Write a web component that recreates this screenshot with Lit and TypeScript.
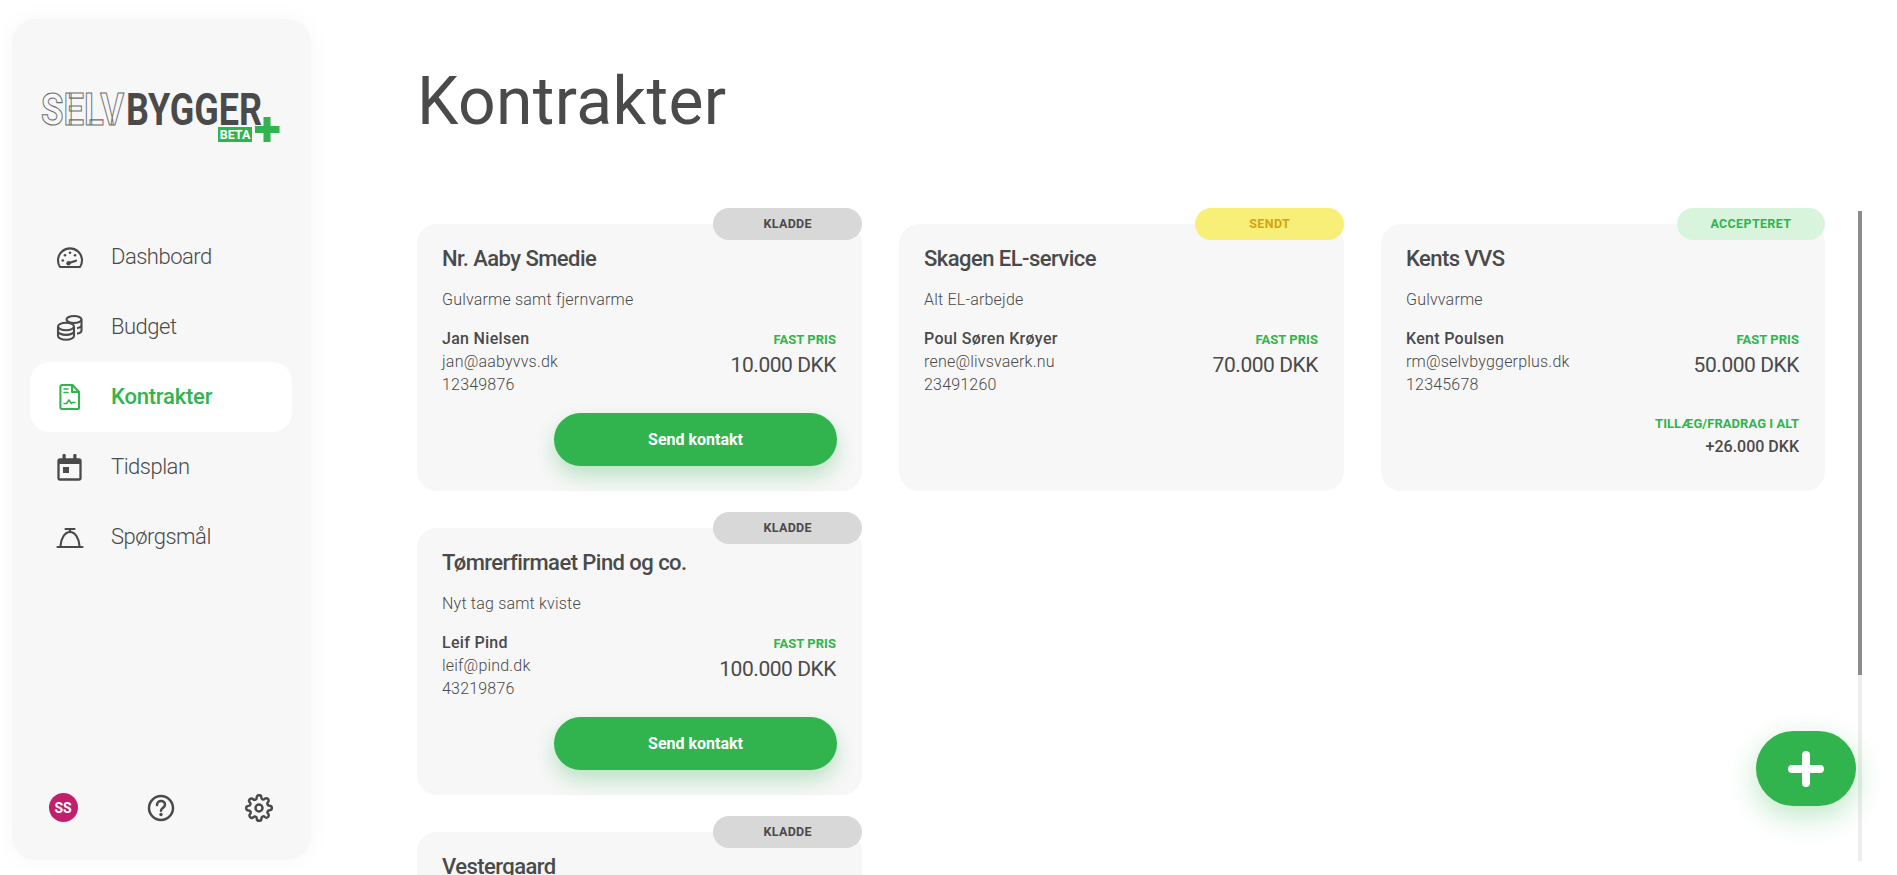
import { LitElement, html, css, svg } from "lit";
import { customElement } from "lit/decorators.js";

interface Contract {
  title: string; desc: string; name: string; email: string; phone: string;
  price: string; status: "kladde" | "sendt" | "accepteret"; action?: boolean; extra?: string;
}

const contracts: Contract[] = [
  { title: "Nr. Aaby Smedie", desc: "Gulvarme samt fjernvarme", name: "Jan Nielsen", email: "jan@aabyvvs.dk", phone: "12349876", price: "10.000 DKK", status: "kladde", action: true },
  { title: "Skagen EL-service", desc: "Alt EL-arbejde", name: "Poul Søren Krøyer", email: "rene@livsvaerk.nu", phone: "23491260", price: "70.000 DKK", status: "sendt" },
  { title: "Kents VVS", desc: "Gulvvarme", name: "Kent Poulsen", email: "rm@selvbyggerplus.dk", phone: "12345678", price: "50.000 DKK", status: "accepteret", extra: "+26.000 DKK" },
  { title: "Tømrerfirmaet Pind og co.", desc: "Nyt tag samt kviste", name: "Leif Pind", email: "leif@pind.dk", phone: "43219876", price: "100.000 DKK", status: "kladde", action: true },
];

const icons = {
  dash: svg`<path d="M4 24A12 12 0 1 1 24 24Z" fill="none" stroke="currentColor" stroke-width="2.100" stroke-linejoin="round"/><circle cx="6.800" cy="17.500" r="1.300" fill="currentColor"/><circle cx="9" cy="12.200" r="1.300" fill="currentColor"/><circle cx="14" cy="9.800" r="1.300" fill="currentColor"/><circle cx="19" cy="12.200" r="1.300" fill="currentColor"/><path d="M13 20l7-2.300" stroke="currentColor" stroke-width="2.200" stroke-linecap="round"/><circle cx="12.500" cy="20.300" r="2.200" fill="currentColor"/>`,
  coins: svg`<g fill="none" stroke="currentColor" stroke-width="2.100"><ellipse cx="18" cy="6.500" rx="7.500" ry="3.500"/><path d="M25.500 6.500v11c0 1.500-1.800 2.700-4.500 3.200M25.500 12c0 1.500-1.800 2.700-4.500 3.200"/><ellipse cx="10" cy="13.500" rx="8" ry="3.700"/><path d="M2 13.500v9.500c0 2 3.600 3.700 8 3.700s8-1.700 8-3.700v-9.500M2 18.200c0 2 3.600 3.700 8 3.700s8-1.700 8-3.700"/></g>`,
  file: svg`<g fill="none" stroke="currentColor" stroke-width="2.100" stroke-linejoin="round" stroke-linecap="round"><path d="M6 2h10.500l6.500 7v15.400c0 .9-.7 1.600-1.600 1.600H6c-.9 0-1.600-.7-1.600-1.600V3.600C4.400 2.700 5.100 2 6 2z"/><path d="M16 2.500V9h6.500"/><path d="M8 6h4M8 9.500h4" stroke-width="1.600"/><path d="M8 20.500h2.500l2.500-3.500 2.500 3.500 1-1h2.500" stroke-width="1.600"/></g>`,
  cal: svg`<path d="M4 6.500h19c1 0 1.500.6 1.500 1.500v17c0 .9-.5 1.500-1.500 1.500H4c-1 0-1.500-.6-1.500-1.500V8c0-.9.5-1.500 1.500-1.500z" fill="none" stroke="currentColor" stroke-width="2.300"/><path d="M2.500 6.500h22V11h-22z" fill="currentColor"/><rect x="6.500" y="1" width="3.200" height="6" rx="1" fill="currentColor"/><rect x="17.300" y="1" width="3.200" height="6" rx="1" fill="currentColor"/><rect x="7" y="14" width="6" height="6" fill="currentColor"/>`,
  bell: svg`<g fill="none" stroke="currentColor" stroke-width="2.200" stroke-linecap="round"><path d="M1.500 24h25"/><path d="M4.500 23c.5-8 4.500-14 9.500-14s9 6 9.500 14"/><path d="M9.500 6h9M14 6v3"/></g>`,
};

@customElement("app-root")
export class AppRoot extends LitElement {
  static styles = css`
    :host { display: block; height: 875px; overflow: hidden; background: #fff; color: #4a4a4a; font-family: Roboto, "Noto Sans", sans-serif; }
    * { box-sizing: border-box; }
    .page { display: flex; height: 875px; position: relative; overflow: hidden; }
    .side { flex: none; width: 299px; height: 841px; margin: 19px 0 0 12px; padding: 75px 0 38px; background: #f7f7f7; border-radius: 24px; box-shadow: 0 0 24px rgba(0,0,0,.035); display: flex; flex-direction: column; }
    .logo { display: block; margin-left: 30px; width: 240px; height: 50px; overflow: visible; }
    .logo text { font-family: Roboto, sans-serif; }
    .nav { display: flex; flex-direction: column; margin: 78px 19px 0 18px; }
    .item { height: 70px; display: flex; align-items: center; padding-left: 26px; gap: 27px; font-size: 22px; font-weight: 300; letter-spacing: -.5px; border-radius: 20px; color: #4a4a4a; }
    .item svg { width: 28px; height: 28px; flex: none; }
    .item span { padding-bottom: 2px; }
    .item.on { background: #fff; color: #31b44e; font-weight: 500; letter-spacing: -.2px; }
    .foot { margin-top: auto; padding: 0 38px 0 36.500px; display: flex; justify-content: space-between; align-items: center; }
    .avatar { width: 29px; height: 29px; border-radius: 50%; background: #c0206c; color: #fff; font-size: 14px; font-weight: 700; display: flex; align-items: center; justify-content: center; }
    .foot svg { width: 28px; height: 28px; display: block; }
    .main { flex: 1; min-width: 0; padding: 61px 0 0 106px; }
    h1 { margin: 0 0 82px; font-size: 66px; line-height: 81px; font-weight: 400; color: #4a4a4a; letter-spacing: .4px; }
    .grid { display: grid; grid-template-columns: 445px 445px 444px; gap: 37px; }
    .card { position: relative; height: 267px; padding: 20px 26px 0 25px; background: #f7f7f7; border-radius: 20px; }
    .first { grid-column: 1; }
    .pill { position: absolute; top: -16px; right: 0; width: 33.4%; height: 32px; padding-bottom: 2px; border-radius: 16px; display: flex; align-items: center; justify-content: center; font-size: 12.500px; font-weight: 700; letter-spacing: .35px; }
    .kladde { background: #d8d8d8; color: #4a4a4a; }
    .sendt { background: #f8ef78; color: #d4a40c; }
    .accepteret { background: #d8f4dc; color: #31b44e; }
    .title { font-size: 22px; line-height: 30px; font-weight: 500; letter-spacing: -.55px; }
    .desc { margin-top: 14px; font-size: 16px; line-height: 24px; font-weight: 300; letter-spacing: .2px; }
    .row { margin-top: 16px; display: flex; justify-content: space-between; align-items: flex-start; }
    .name { font-size: 16px; line-height: 21.500px; font-weight: 500; letter-spacing: .3px; }
    .line { font-size: 16px; line-height: 23px; font-weight: 300; letter-spacing: .2px; }
    .right { text-align: right; }
    .label { font-size: 13px; line-height: 23px; font-weight: 700; color: #31b44e; letter-spacing: .05px; }
    .price { font-size: 21px; line-height: 28px; font-weight: 400; letter-spacing: -.45px; }
    .btn { position: absolute; left: 137px; top: 189px; width: 283px; height: 53px; border: 0; border-radius: 27px; background: #31b44e; color: #fff; font: 700 16px Roboto, sans-serif; box-shadow: 0 10px 20px rgba(49,180,78,.3); }
    .extra { position: absolute; right: 26px; top: 188px; text-align: right; }
    .extra .val { font-size: 16px; line-height: 23px; font-weight: 500; }
    .bar { position: absolute; left: 1858px; top: 211px; width: 4px; height: 650px; background: #eee; }
    .thumb { width: 4px; height: 464px; background: #8c8c8c; }
    .fab { position: absolute; left: 1756px; top: 731px; width: 100px; height: 75px; border: 0; padding: 0; border-radius: 38px; background: #31b44e; box-shadow: 0 10px 30px rgba(49,180,78,.32); display: flex; align-items: center; justify-content: center; }
    .fab svg { width: 36px; height: 36px; display: block; }
  `;

  private nav(icon: unknown, label: string, on = false) {
    return html`<div class="item ${on ? "on" : ""}"><svg viewBox="0 0 28 28">${icon}</svg><span>${label}</span></div>`;
  }

  private card(c: Contract) {
    return html`<article class="card">
      <div class="pill ${c.status}">${c.status.toUpperCase()}</div>
      <div class="title">${c.title}</div>
      <div class="desc">${c.desc}</div>
      <div class="row">
        <div><div class="name">${c.name}</div><div class="line">${c.email}</div><div class="line">${c.phone}</div></div>
        <div class="right"><div class="label">FAST PRIS</div><div class="price">${c.price}</div></div>
      </div>
      ${c.action ? html`<button class="btn">Send kontakt</button>` : ""}
      ${c.extra ? html`<div class="extra"><div class="label">TILLÆG/FRADRAG I ALT</div><div class="val">${c.extra}</div></div>` : ""}
    </article>`;
  }

  render() {
    return html`<div class="page">
      <aside class="side">
        <svg class="logo" viewBox="0 0 240 50">
          <text x="-1" y="31" font-size="44" font-weight="700" textLength="83" lengthAdjust="spacingAndGlyphs" fill="none" stroke="#6e6e6e" stroke-width="1.100">SELV</text>
          <text x="84" y="31" font-size="44" font-weight="700" textLength="136" lengthAdjust="spacingAndGlyphs" fill="#4a4a4a">BYGGER</text>
          <rect x="176" y="33" width="34" height="15" fill="#31b44e"/>
          <text x="193" y="45" font-size="12.500" font-weight="700" text-anchor="middle" fill="#fff">BETA</text>
          <path d="M221.500 23h7v9h9v7h-9v9h-7v-9h-8.500v-7h8.500z" fill="#31b44e"/>
        </svg>
        <nav class="nav">
          ${this.nav(icons.dash, "Dashboard")}
          ${this.nav(icons.coins, "Budget")}
          ${this.nav(icons.file, "Kontrakter", true)}
          ${this.nav(icons.cal, "Tidsplan")}
          ${this.nav(icons.bell, "Spørgsmål")}
        </nav>
        <div class="foot">
          <div class="avatar">SS</div>
          <svg viewBox="0 0 28 28" fill="none" stroke="#4a4a4a" stroke-width="2.500"><circle cx="14" cy="14" r="12"/><path d="M10 11c0-2.500 1.800-4 4-4s4 1.500 4 3.700c0 3-4 3-4 6" stroke-linecap="round"/><circle cx="14" cy="20.500" r="1.700" fill="#4a4a4a" stroke="none"/></svg>
          <svg viewBox="0 0 24 24" fill="none" stroke="#4a4a4a" stroke-width="2.100" stroke-linejoin="round"><circle cx="12" cy="12" r="3"/><path d="M19.400 15a1.650 1.650 0 0 0 .33 1.820l.06.06a2 2 0 1 1-2.830 2.830l-.06-.06a1.650 1.650 0 0 0-2.800 1.170V21a2 2 0 1 1-4 0v-.09a1.650 1.650 0 0 0-2.820-1.110l-.06.06a2 2 0 1 1-2.830-2.830l.06-.06a1.650 1.650 0 0 0-1.170-2.800H3a2 2 0 1 1 0-4h.09a1.650 1.650 0 0 0 1.110-2.820l-.06-.06a2 2 0 1 1 2.830-2.830l.06.06a1.650 1.650 0 0 0 1.820.33H9a1.650 1.650 0 0 0 1-1.510V3a2 2 0 1 1 4 0v.09a1.650 1.650 0 0 0 2.800 1.170l.06-.06a2 2 0 1 1 2.830 2.830l-.06.06a1.650 1.650 0 0 0-.33 1.820V9a1.650 1.650 0 0 0 1.510 1H21a2 2 0 1 1 0 4h-.09a1.650 1.650 0 0 0-1.510 1z"/></svg>
        </div>
      </aside>
      <main class="main">
        <h1>Kontrakter</h1>
        <div class="grid">
          ${contracts.map((c) => this.card(c))}
          <article class="card first"><div class="pill kladde">KLADDE</div><div class="title">Vestergaard</div></article>
        </div>
      </main>
      <div class="bar"><div class="thumb"></div></div>
      <button class="fab" aria-label="Tilføj"><svg viewBox="0 0 36 36"><path d="M18 4v28M4 18h28" stroke="#fff" stroke-width="8" stroke-linecap="round"/></svg></button>
    </div>`;
  }
}
